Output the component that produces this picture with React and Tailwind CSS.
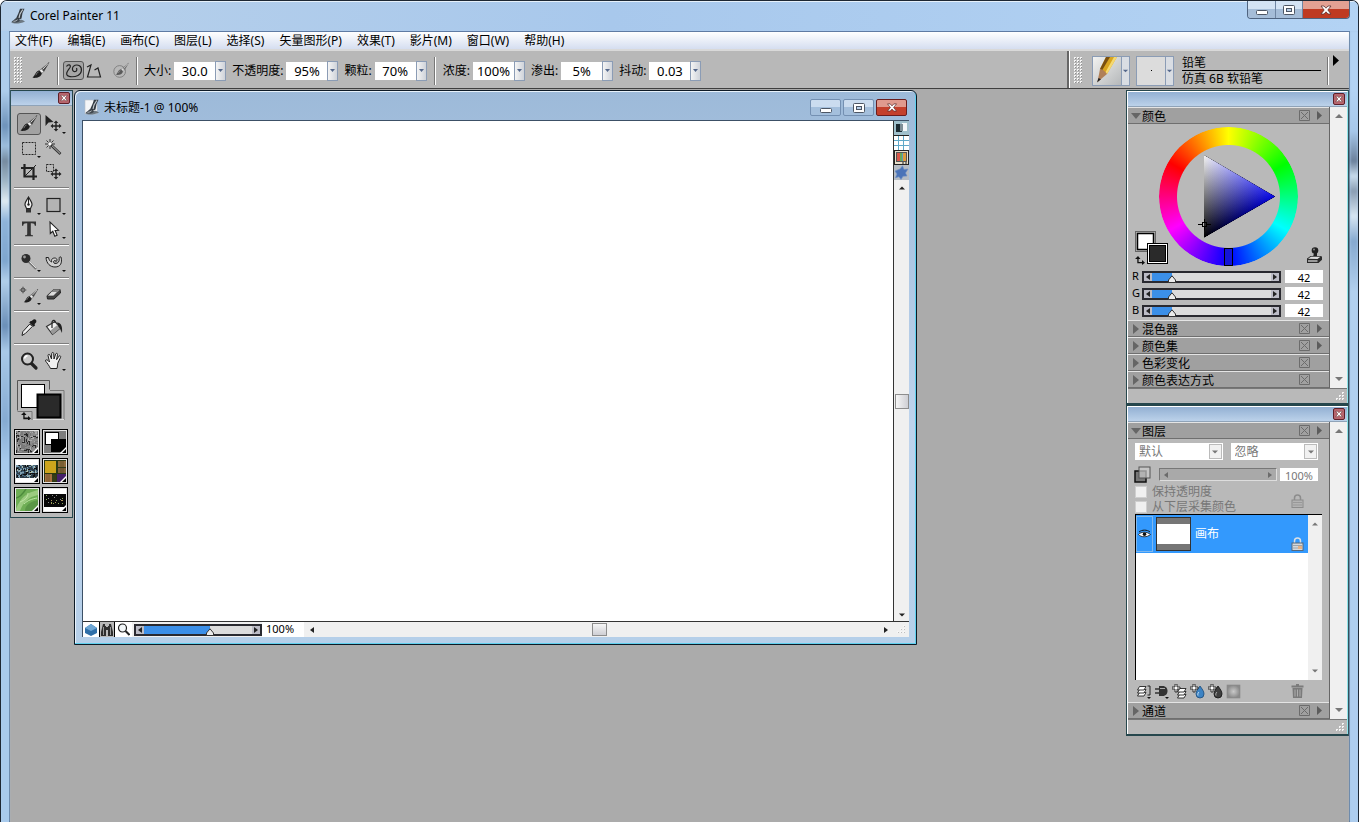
import React, { useState } from "react";

const ui = "font-['Noto_Sans','Noto_Sans_CJK_SC',sans-serif]";

function CloseCross({ className = "" }) {
  return (
    <svg className={className} viewBox="0 0 12 10" aria-hidden="true">
      <path d="M1 1h3l2 2.2L8 1h3L7.8 5 11 9H8L6 6.8 4 9H1l3.200-4z" fill="#fff" stroke="#5a3030" strokeWidth=".8" />
    </svg>
  );
}

function MinGlyph() {
  return (
    <svg className="h-3 w-4" viewBox="0 0 16 12" aria-hidden="true">
      <rect x="2.500" y="6.500" width="11" height="4" rx="1" fill="#fff" stroke="#4d5664" />
    </svg>
  );
}

function MaxGlyph() {
  return (
    <svg className="h-3 w-4" viewBox="0 0 16 12" aria-hidden="true">
      <rect x="2.500" y="1.500" width="11" height="9" rx="1" fill="#fff" stroke="#4d5664" />
      <rect x="5.500" y="4.500" width="5" height="3" fill="#b9cfe8" stroke="#4d5664" />
    </svg>
  );
}

function PainterIcon({ page }) {
  return (
    <svg className="h-4 w-4 shrink-0" viewBox="0 0 16 16" aria-hidden="true">
      {page && <path d="M1 1h8l4 4v10H1z" fill="#f4f6f8" stroke="#b8c0c8" strokeWidth=".6" />}
      <path d="M1 14.500c3 1.500 9 1.500 14-1-2-1.600-4-2-6-1.500z" fill="#6d7982" />
      <path d="M10 .8h4.500L12.500 5l-1 5.500-4 2-1.500-2L8.500 5z" fill="#343b42" />
      <path d="M12.800 1.500 10 6l-1 4" stroke="#c5ccd2" strokeWidth="1.100" fill="none" />
      <path d="M6.700 10c-2 .3-2.500 2.500-5.200 3.500 2.500 1.700 7 1.400 8.500-1z" fill="#3f474e" />
      <path d="M3.500 13.300c1.500 0 3-.5 4-1.500" stroke="#dfe5ea" strokeWidth=".8" fill="none" />
    </svg>
  );
}

function Tri({ dir, className = "fill-[#444]" }) {
  const d = { up: "M0 5 4 1l4 4z", down: "M0 1h8L4 5z", left: "M6 0v6L2 3z", right: "M2 0v6l4-3z" }[dir];
  return (
    <svg className={"h-[6px] w-[8px] " + className} viewBox="0 0 8 6" aria-hidden="true">
      <path d={d} />
    </svg>
  );
}

function Grip() {
  return (
    <svg className="h-[27px] w-[8px] shrink-0" aria-hidden="true">
      <defs>
        <pattern id="grip" width="3" height="3" patternUnits="userSpaceOnUse">
          <rect width="2" height="2" fill="#f4f4f4" />
          <rect x="1" y="1" width="1" height="1" fill="#8f8f8f" />
        </pattern>
      </defs>
      <rect width="8" height="27" fill="url(#grip)" />
    </svg>
  );
}

function SizeGrip() {
  return (
    <svg className="h-[9px] w-[9px]" viewBox="0 0 9 9" aria-hidden="true">
      <path d="M6 0h2v2H6zM3 3h2v2H3zM6 3h2v2H6zM0 6h2v2H0zM3 6h2v2H3zM6 6h2v2H6z" fill="#f6f6f6" />
      <path d="M8 1v1H7zM5 4v1H4zM8 4v1H7zM2 7v1H1zM5 7v1H4zM8 7v1H7z" fill="#888" />
    </svg>
  );
}

/* ---------- tool glyphs, on a 20x20 grid ---------- */
const Brush = () => (
  <>
    <path d="M18 1.500 10.500 8l2.300 2.400z" fill="#4a4a4a" stroke="#222" strokeWidth=".5" />
    <path d="M17 2.500 11.500 8.500" stroke="#eee" strokeWidth=".9" />
    <path d="m10.300 8-2 1.600 2.600 2.700 1.900-1.900z" fill="#eee" stroke="#444" strokeWidth=".5" />
    <path d="M8.200 9.600c-3.500.4-3.700 4.400-6.700 7.200 4 .6 8.800-.6 9.300-4.500z" fill="#1d1d1d" />
    <path d="M7.500 11c-1.500.5-2 2-2.700 3.200" stroke="#999" fill="none" strokeWidth=".8" />
  </>
);
const Cross4 = ({ x, y }) => (
  <g transform={`translate(${x} ${y})`}>
    <path d="M0-5.500 2.300-3H.7v2.300H3v-1.600L5.500 0 3 2.300V.7H.7V3h1.600L0 5.500-2.300 3h1.600V.7H-3v1.600L-5.500 0-3-2.300v1.600h2.300V-3h-1.600z" fill="#222" />
  </g>
);
const glyphs = {
  brush: <Brush />,
  layerAdjust: (
    <>
      <path d="M1.500 1v11l3-3.500L9.500 8z" fill="#222" />
      <Cross4 x={12} y={12} />
    </>
  ),
  select: <rect x="3.500" y="4.500" width="13" height="12" fill="none" stroke="#222" strokeDasharray="2 1" />,
  wand: (
    <>
      <path d="m7 7 9.500 9" stroke="#333" strokeWidth="2.600" />
      <path d="m8 7.700 8 7.700" stroke="#bbb" strokeWidth="1" />
      <path d="M6 1v3M6 8v3M1 6h3M8 6h3M2.500 2.500l2 2M9.500 2.500l-2 2M2.500 9.500l2-2" stroke="#222" strokeWidth=".9" />
      <circle cx="6" cy="6" r="1.300" fill="#fff" />
    </>
  ),
  crop: (
    <>
      <path d="M5.500 2v12.500H18M2 6h12.500v12" fill="none" stroke="#222" strokeWidth="2.200" />
      <path d="M17 3 6 14" stroke="#222" />
    </>
  ),
  selAdjust: (
    <>
      <rect x="2.500" y="2.500" width="7" height="7" fill="none" stroke="#222" strokeDasharray="2 1" />
      <Cross4 x={12} y={12} />
    </>
  ),
  pen: (
    <>
      <path d="M9.500 2C8 5 5.500 7.500 6 10l1.500 3.500h4L13 10C13.500 7.500 11 5 9.500 2z" fill="#f0f0f0" stroke="#222" strokeWidth="1.100" />
      <path d="M9.500 2v7" stroke="#222" />
      <circle cx="9.500" cy="9.500" r="1.200" fill="#222" />
      <path d="M7 14h5v3.500H7z" fill="#333" />
    </>
  ),
  rect: <rect x="3" y="3.500" width="13" height="13" fill="#b4b4b4" stroke="#222" strokeWidth="1.200" />,
  text: <path d="M3 2.500h14v4.200h-1.200c-.3-1.800-1-2.500-3-2.500h-1V15c0 1 .6 1.200 2.200 1.300v1H6v-1c1.600-.1 2.200-.3 2.200-1.300V4.200h-1c-2 0-2.700.7-3 2.500H3z" fill="#333" />,
  shapeSel: <path d="m6 3 .3 11.500 2.500-2.200 2 5 2.300-1-2-4.800 3.400-.3z" fill="#fff" stroke="#222" strokeWidth="1.100" />,
  dodge: (
    <>
      <path d="m9 9 8 8" stroke="#777" strokeWidth="2.200" />
      <path d="m10 9 7 7" stroke="#ddd" />
      <circle cx="7" cy="6.500" r="4.500" fill="#2c2c2c" />
      <circle cx="5.500" cy="5" r="1.400" fill="#999" />
    </>
  ),
  spiral: (
    <>
      <path d="M2 5.500c.5 6 4 9.500 9 9.500 5.500 0 7.500-4 6-10-1-.5-2 .2-1.800 1.500.4 3-1 5-4.200 5-1.500 0-2-2.500-.5-3 1-.3 1.500.5 1.300 1.200 2-1.200 1.200-3.700-1-3.700-3 0-3.800 2-3 4C6 9.500 5 8 4.500 5.500z" fill="#d0d0d0" stroke="#222" />
    </>
  ),
  cloner: (
    <>
      <g transform="translate(3.500 3) scale(.85)"><Brush /></g>
      <circle cx="4" cy="5" r="2" fill="none" stroke="#444" />
      <path d="M4 1.500v7M.5 5h7" stroke="#444" strokeWidth=".6" />
    </>
  ),
  eraser: (
    <>
      <path d="M9.500 4.500H16l.5 3.500-6.500 6H3.500L3 10.800z" fill="#444" stroke="#222" />
      <path d="M9.500 4.500H16L9.500 11H3.200z" fill="#ddd" stroke="#333" strokeWidth=".7" />
      <path d="M9.500 4.500H16L13.500 7H7.200z" fill="#888" />
    </>
  ),
  dropper: (
    <>
      <path d="m12.500 3 2-1.500c2-.8 3.500 1 2.700 2.700L15.500 6.300l.7.900-1.700 1.500-4.300-4.300 1.500-1.500z" fill="#1d1d1d" />
      <path d="m10.800 6 2.500 2.500-7 7L3 17.500l.8-3.800z" fill="#eee" stroke="#222" />
    </>
  ),
  bucket: (
    <>
      <path d="m2.500 8.500 8.500-5 5.500 6.500-8 6.500z" fill="#eee" stroke="#333" strokeWidth="1.200" />
      <path d="m6.500 12.500 7.500-6 2.500 3.500-8 6.500z" fill="#999" />
      <path d="M8 10V4C9 1.500 11.500 2 11 5" fill="none" stroke="#222" strokeWidth="1.200" />
      <path d="M13 4.500c5 .5 5.500 5 5 10.500-1.500-3-2-5-3.500-6z" fill="#222" />
    </>
  ),
  zoom: (
    <>
      <path d="m12 12 5 5" stroke="#222" strokeWidth="3.200" strokeLinecap="round" />
      <circle cx="8.500" cy="8" r="5.500" fill="#c9c9c9" stroke="#222" strokeWidth="2" />
      <path d="M5.500 7.500c.3-1.500 1.500-2.600 3-2.800" stroke="#fff" fill="none" strokeWidth="1.500" />
    </>
  ),
  hand: (
    <path d="M6.500 17.500C5 14.500 3.500 12.500 1.500 10c-.3-1.500 1.500-1.500 2.500-.5L5.500 11 4 4.500c0-1.500 1.700-1.500 2-.2L7.500 8 7.700 2.500c.2-1.400 1.900-1.400 2 0L10 8l1.700-5c.6-1.200 2-.8 1.800.5l-.9 5.200 2.300-3.500c.9-1 2.200-.2 1.700 1l-2.800 6c-.2 2-.3 3.500-.8 5.300z" fill="#f1f1f1" stroke="#222" strokeWidth="1" />
  ),
};

const toolGroups = [
  [["brush", "画笔"], ["layerAdjust", "图层调整", 1], ["select", "矩形选区", 1], ["wand", "魔棒"], ["crop", "裁剪"], ["selAdjust", "选区调整"]],
  [["pen", "钢笔", 1], ["rect", "矩形", 1], ["text", "文字"], ["shapeSel", "形状选择", 1]],
  [["dodge", "减淡", 1], ["spiral", "构图", 1]],
  [["cloner", "克隆", 1], ["eraser", "橡皮擦"]],
  [["dropper", "吸管"], ["bucket", "油漆桶"]],
  [["zoom", "放大镜"], ["hand", "抓手", 1]],
];

function Tool({ id, label, more, active, onClick }) {
  return (
    <button
      type="button"
      aria-label={label}
      aria-pressed={active}
      onClick={onClick}
      className="relative flex h-6 w-[25px] items-center justify-center"
    >
      <span className={active ? "rounded-[3px] border border-[#555] bg-[#a2a2a2] px-px" : ""}>
        <svg className="block h-5 w-5" viewBox="0 0 20 20" aria-hidden="true">{glyphs[id]}</svg>
      </span>
      {more && (
        <svg className="absolute right-0 bottom-[2px] h-[2px] w-[4px]" viewBox="0 0 4 2" aria-hidden="true">
          <path d="M0 0h4L2 2z" fill="#111" />
        </svg>
      )}
    </button>
  );
}

function PaletteBar() {
  return (
    <div className="flex h-[15px] items-center justify-end border-b border-[#8fa3b8] bg-linear-to-b from-[#93b0d3] to-[#bcd2ea] pr-[2px]">
      <button type="button" aria-label="关闭面板" className="flex h-[12px] w-[12px] items-center justify-center rounded-[2px] border border-[#5d1f28] bg-[#b8666e]">
        <CloseCross className="h-[8px] w-[8px]" />
      </button>
    </div>
  );
}

function speckle(seed, colors, n, x0, y0, w, h, size) {
  const out = [];
  let s = seed;
  const next = () => (s = (s * 16807) % 2147483647) / 2147483647;
  for (let i = 0; i < n; i++) {
    const x = x0 + Math.floor(next() * (w - 1));
    const y = y0 + Math.floor(next() * (h - 1));
    const t = next() > 0.5;
    out.push(<rect key={i} x={x} y={y} width={t ? size : 1} height={t ? 1 : size} fill={colors[Math.floor(next() * colors.length)]} />);
  }
  return out;
}

const textures = [
  ["纸纹", <><rect width="22" height="22" fill="#7a7a7a" />{speckle(7, ["#2a2a2a", "#aaa", "#8c8c8c", "#8c8c8c"], 150, 0, 0, 22, 22, 3)}</>],
  ["渐变", <><rect width="22" height="22" fill="#7d7d7d" /><rect x="1.500" y="1.500" width="13" height="12" fill="#fff" stroke="#000" /><rect x="7" y="8" width="15" height="13" fill="#000" /></>],
  ["图案", <><rect width="22" height="22" fill="#fff" /><rect y="5" width="22" height="13" fill="#2e3d48" />{speckle(31, ["#7e9fb1", "#a9bcae", "#111", "#4b6d84"], 130, 0, 5, 22, 13, 2)}</>],
  ["织物", <><rect width="22" height="22" fill="#2c3a14" /><rect x="1" y="1" width="11" height="12" fill="#cda51c" /><rect x="14" y="1" width="8" height="6" fill="#8d6b3b" /><rect x="14" y="8" width="8" height="5" fill="#80603a" /><rect x="1" y="14" width="7" height="8" fill="#a7713f" /><rect x="13" y="14" width="9" height="8" fill="#46206b" /><path d="M9 15v6M11 15v6M3 14v8M5 14v8M17 1v12M19 1v12" stroke="#4d4422" strokeWidth=".6" /></>],
  ["外观", <><rect width="22" height="22" fill="#6fae55" /><path d="M0 20C5 8 10 4 22 1v5C12 8 7 14 4 22H0z" fill="#9ccb80" /><path d="M9 22c0-6 5-9 13-11v11z" fill="#5a9646" /><path d="M0 9C5 8 8 3 10 0" stroke="#4c8a3c" fill="none" strokeWidth="1.500" /><path d="M8 15c4-4 8-5 13-6M12 4c0 4-3 7-8 9" stroke="#bfe6a5" fill="none" /></>],
  ["喷嘴", <><rect width="22" height="22" fill="#fff" /><rect y="5" width="22" height="13" fill="#080808" />{speckle(11, ["#8dab5a", "#b0955c", "#8d8d8d"], 20, 2, 6, 18, 11, 1)}</>],
];

function SwapIcon({ className = "" }) {
  return (
    <svg className={"h-[9px] w-[10px] " + className} viewBox="0 0 10 9" aria-hidden="true">
      <path d="M3 0 5.500 3H3.600v3H7V4l3 2.700L7 9V7.300H2.300V3H0z" fill="#111" />
    </svg>
  );
}

function ToolPalette() {
  const [tool, setTool] = useState("brush");
  return (
    <aside className="w-[63px] shrink-0 border border-[#26474d] bg-[#b9b9b9]">
      <PaletteBar />
      <div className="flex flex-col px-[3px] pt-[6px] pb-1">
        {toolGroups.map((group, i) => (
          <div key={i}>
            {i > 0 && <div className="mt-[3px] mb-1 h-[2px] border-t border-[#7d7d7d] bg-white" />}
            <div className="grid grid-cols-[25px_25px] pl-[2px]">
              {group.map(([id, label, more]) => (
                <Tool key={id} id={id} label={label} more={!!more} active={tool === id} onClick={() => setTool(id)} />
              ))}
            </div>
          </div>
        ))}
        <div className="px-[3px] pt-[7px] pb-[9px]">
          <svg className="block h-10 w-12" viewBox="0 0 48 40" role="img" aria-label="主色与副色">
            <path d="M.5 30.500V.5h32v9" fill="none" stroke="#555" />
            <path d="M33 10.500h14v29.500M.5 31.500H15V40" fill="none" stroke="#777" />
            <path d="M16 39.500h31" stroke="#ddd" />
            <rect x="4.500" y="4.500" width="23" height="23" fill="#fff" stroke="#000" />
            <rect x="20.500" y="14.500" width="23" height="23" fill="#2a2a2a" stroke="#000" strokeWidth="2" />
            <path d="M7 32 9.500 35H7.600v2.500H11V36l3 2.500-3 2.300v-1.500H6.300V35H4z" fill="#111" />
          </svg>
        </div>
        <div className="grid grid-cols-[26px_26px] gap-x-[2px] gap-y-[3px]">
          {textures.map(([label, art]) => (
            <button key={label} type="button" aria-label={label} className="h-[26px] border border-black bg-[#e4e4e4] p-px">
              <svg className="block h-full w-full" viewBox="0 0 22 22" preserveAspectRatio="none" aria-hidden="true">
                {art}
                <path d="M22 16v6h-6z" fill="#fff" />
                <path d="M22 18v4h-4z" fill="#000" />
              </svg>
            </button>
          ))}
        </div>
      </div>
    </aside>
  );
}

function Stepper({ label, value }) {
  return (
    <div className="flex items-center">
      <label htmlFor={"opt-" + label} className="pt-px pr-[3px] text-[12px]">{label}:</label>
      <input id={"opt-" + label} defaultValue={value} className="h-[18px] w-[41px] bg-white text-center text-[13px] leading-[18px] outline-none" />
      <button type="button" aria-label={label + "滑块"} className="flex h-[20px] w-[11px] items-center justify-center border border-[#8b9cb5] bg-linear-to-r from-[#f4f4f4] to-[#cfd3da]">
        <svg className="h-[3px] w-[5px]" viewBox="0 0 5 3" aria-hidden="true"><path d="M0 0h5L2.500 3z" fill="#55688c" /></svg>
      </button>
    </div>
  );
}

function Divider() {
  return <div className="h-7 w-[2px] shrink-0 border-l border-[#777] bg-white" />;
}

function ToolBar() {
  return (
    <div className="flex h-10 border-t-2 border-b border-t-[#d9d9d9] border-b-[#3f3f3f] bg-[#b8b8b8]">
      <div className="flex min-w-0 flex-1 items-center border-r-2 border-[#666] pt-[2px] pl-1">
        <Grip />
        <svg className="ml-[9px] h-5 w-5" viewBox="0 0 20 20" aria-hidden="true"><Brush /></svg>
        <div className="ml-[6px]"><Divider /></div>
        <div className="ml-1 flex items-center gap-[2px]">
          <button type="button" aria-label="自由笔触" className="flex h-[19px] w-[21px] items-center justify-center rounded-[3px] border border-[#555] bg-[#a5a5a5]">
            <svg className="h-4 w-[18px]" viewBox="0 0 18 16" aria-hidden="true">
              <path d="M1.500 3.500C3 1 6.500 1.500 5 4.500 3.500 7 .5 9.500 2 12c1.500 2.500 8 2 11 .5C17 10.500 17.500 5 14.500 2.800 11.500 1 8 2.500 7.500 5c-.4 2.500 1 4 3 3.500 1.500-.5 1.500-2 1-3.500" fill="none" stroke="#222" strokeWidth="1.200" />
            </svg>
          </button>
          <button type="button" aria-label="直线笔触">
            <svg className="block h-4 w-4" viewBox="0 0 16 16" aria-hidden="true">
              <path d="m1 4 4-2L1.500 14h13L12 5 8.500 7" fill="none" stroke="#222" strokeWidth="1.200" />
            </svg>
          </button>
          <button type="button" aria-label="对齐路径" className="ml-2 opacity-60">
            <svg className="block h-[18px] w-[18px]" viewBox="0 0 20 20" aria-hidden="true">
              <circle cx="8.500" cy="10.500" r="6.500" fill="none" stroke="#555" />
              <g transform="translate(3 0) scale(.85)"><Brush /></g>
            </svg>
          </button>
        </div>
        <div className="mx-[6px]"><Divider /></div>
        <div className="flex items-center gap-[6px]">
          <Stepper label="大小" value="30.0" />
          <Stepper label="不透明度" value="95%" />
          <Stepper label="颗粒" value="70%" />
        </div>
        <div className="mx-[7px]"><Divider /></div>
        <div className="flex items-center gap-[6px]">
          <Stepper label="浓度" value="100%" />
          <Stepper label="渗出" value="5%" />
          <Stepper label="抖动" value="0.03" />
        </div>
      </div>
      <div className="flex w-[280px] shrink-0 items-center border-l border-white pt-[2px] pl-1">
        <Grip />
        <button type="button" aria-label="画笔类别" className="ml-[10px] flex h-[30px] border border-[#8b9cb5]">
          <svg className="block h-7 w-7" viewBox="0 0 28 28" aria-hidden="true">
            <defs>
              <linearGradient id="pbg" x1="0" y1="0" x2="1" y2="1"><stop offset="0" stopColor="#f2f2f0" /><stop offset="1" stopColor="#b5b8ba" /></linearGradient>
            </defs>
            <rect width="28" height="28" fill="url(#pbg)" />
            <path d="M13 0h11L14 17l-7-5z" fill="#d9a520" />
            <path d="M13 0h4L9 13.500 7 12z" fill="#7a4f10" />
            <path d="M21 0h3L14 17l-2-1z" fill="#f5d970" />
            <path d="M7 12c2.500.5 5 2 7 5l-9.500 8z" fill="#b08058" />
            <path d="M5.500 21 8 22.300 4 25.500z" fill="#222" />
          </svg>
          <span className="flex w-[8px] items-center justify-center border-l border-[#8b9cb5] bg-[#d9dde3]"><Tri dir="down" className="fill-[#55688c] scale-75" /></span>
        </button>
        <button type="button" aria-label="画笔变体" className="ml-[6px] flex h-[30px] border border-[#8b9cb5]">
          <span className="flex h-7 w-7 items-center justify-center bg-[#dcdcdc]"><span className="h-px w-px bg-black" /></span>
          <span className="flex w-[8px] items-center justify-center border-l border-[#8b9cb5] bg-[#d9dde3]"><Tri dir="down" className="fill-[#55688c] scale-75" /></span>
        </button>
        <div className="ml-2 flex-1 text-[12px] leading-4">
          <div className="h-4 border-b border-black">铅笔</div>
          <div>仿真 6B 软铅笔</div>
        </div>
        <div className="ml-[6px] h-7 w-[2px] border-l border-[#777] bg-white" />
        <button type="button" aria-label="画笔菜单" className="mx-[4px] self-start pt-[2px]">
          <svg className="mr-[6px] h-[11px] w-[6px]" viewBox="0 0 6 11" aria-hidden="true"><path d="M0 0v11l6-5.500z" fill="#000" /></svg>
        </button>
      </div>
    </div>
  );
}

/* Horizontal slider with end arrows; the native range input handles input. */
function ArrowSlider({ label, initial, max, fill = true, disabled, className = "" }) {
  const [v, setV] = useState(initial);
  const pct = (v / max) * 100;
  if (disabled) {
    return (
      <div className={"relative flex h-[13px] items-center justify-between border border-t-[#777] border-l-[#777] border-r-[#ddd] border-b-[#ddd] bg-[#a9a9a9] px-[2px] " + className}>
        <Tri dir="left" className="fill-[#6b6b6b]" />
        <input type="range" aria-label={label} disabled value={v} max={max} readOnly className="absolute inset-0 h-full w-full opacity-0" />
        <Tri dir="right" className="fill-[#6b6b6b]" />
      </div>
    );
  }
  return (
    <div className={"flex h-[12px] items-stretch border-2 border-[#2a2a30] bg-[#dcdcdc] " + className}>
      <button type="button" aria-label={label + "减"} onClick={() => setV(Math.max(0, v - 1))} className="flex w-[8px] items-center bg-[#bcbcc6]"><Tri dir="left" className="fill-[#222]" /></button>
      <div className="relative flex-1">
        {fill && <div className="h-full bg-[#3b8fe8]" style={{ width: pct + "%" }} />}
        <input type="range" aria-label={label} value={v} max={max} onChange={(e) => setV(+e.target.value)} className="absolute inset-0 h-full w-full opacity-0" />
        <svg className="pointer-events-none absolute top-[2px] h-[8px] w-[8px] -translate-x-1/2" style={{ left: pct + "%" }} viewBox="0 0 8 8" aria-hidden="true">
          <path d="M4 .8 7.500 5v2.500h-7V5z" fill="#ececec" stroke="#333" />
        </svg>
      </div>
      <button type="button" aria-label={label + "加"} onClick={() => setV(Math.min(max, v + 1))} className="flex w-[8px] items-center bg-[#bcbcc6]"><Tri dir="right" className="fill-[#222]" /></button>
    </div>
  );
}

function CanvasWindow() {
  return (
    <section className="ml-px flex min-w-0 max-w-[843px] flex-1 flex-col rounded-t-[6px] border border-[#0d1a26] bg-[#b9d1ea] bg-linear-to-b from-[#9dbad9] via-[#bdd3ec] via-60% to-[#b5cfe9] shadow-[inset_-1px_-1px_0_#5fd0ee,inset_1px_1px_0_#e8f2fb]">
      <header className="flex h-[29px] items-center gap-[4px] pt-[3px] pr-[9px] pl-[9px]">
        <PainterIcon page />
        <h2 className="pt-px text-[12px]">未标题-1 @ 100%</h2>
        <div className="ml-auto flex gap-[2px] pt-px">
          <button type="button" aria-label="最小化" className="flex h-[17px] w-[31px] items-center justify-center rounded-[2px] border border-[#7490b2] bg-linear-to-b from-[#cbdcef] from-50% to-[#a4bfdc] to-50%"><MinGlyph /></button>
          <button type="button" aria-label="最大化" className="flex h-[17px] w-[31px] items-center justify-center rounded-[2px] border border-[#7490b2] bg-linear-to-b from-[#cbdcef] from-50% to-[#a4bfdc] to-50%"><MaxGlyph /></button>
          <button type="button" aria-label="关闭" className="flex h-[17px] w-[31px] items-center justify-center rounded-[2px] border border-[#6b1d1d] bg-linear-to-b from-[#e09a8e] from-50% to-[#c4402c] to-50%"><CloseCross className="h-[9px] w-[12px]" /></button>
        </div>
      </header>
      <div className="mx-[7px] mb-[7px] flex flex-col border-t border-l border-[#3c5066]">
        <div className="flex">
          <div className="h-[500px] flex-1 bg-white" />
          <div className="flex w-[16px] flex-col border-l border-[#333] bg-[#f0f0f0]">
            <button type="button" aria-label="切换图像" className="h-[14px] bg-[#9fc0cc]">
              <svg className="block h-[14px] w-[15px]" viewBox="0 0 15 14" aria-hidden="true"><rect x="2" y="3" width="6" height="8" fill="#1c2c33" /><rect x="8" y="2" width="5" height="8" fill="#f3f8fa" /><rect x="6" y="3" width="3" height="7" fill="#7d8f97" /></svg>
            </button>
            <button type="button" aria-label="网格">
              <svg className="block h-[15px] w-[15px]" viewBox="0 0 15 15" aria-hidden="true"><rect width="15" height="15" fill="#fff" /><path d="M0 .5h15" stroke="#222" /><path d="M4.500 1v14M9.500 1v14M0 5.500h15M0 10.500h15" stroke="#5fa8c8" /></svg>
            </button>
            <button type="button" aria-label="色彩管理">
              <svg className="block h-[15px] w-[15px]" viewBox="0 0 15 15" aria-hidden="true"><rect x=".5" y=".5" width="14" height="14" fill="#e8e0cc" stroke="#222" /><rect x="2.500" y="2.500" width="10" height="9" fill="#8b7a70" stroke="#555" /><rect x="3" y="3" width="3" height="8" fill="#d9574a" /><rect x="6" y="3" width="2" height="8" fill="#6aa858" /><rect x="8" y="3" width="1" height="8" fill="#5aa0b8" /><rect x="9" y="3" width="3" height="8" fill="#dc9a3e" /><path d="M8 13h2M11 13h2" stroke="#222" /></svg>
            </button>
            <button type="button" aria-label="厚涂" className="bg-[#b5bcc4]">
              <svg className="block h-[15px] w-[15px]" viewBox="0 0 15 15" aria-hidden="true"><path d="m6 4 2.500-3.200L10 4.500l4-.5-2.500 4 1.500 3-4 .2-2 3.300-2-2.800-3.500 1L3 9 1 6z" fill="#4b74b8" stroke="#6d90c8" strokeWidth=".6" /></svg>
            </button>
            <div className="flex flex-1 flex-col items-center justify-between pt-[5px] pb-[3px]">
              <button type="button" aria-label="向上滚动"><Tri dir="up" className="block fill-[#222] scale-75" /></button>
              <div className="h-[15px] w-[14px] border border-[#8d8d8d] bg-linear-to-r from-[#f6f6f6] to-[#cfcfd4]" />
              <button type="button" aria-label="向下滚动"><Tri dir="down" className="block fill-[#222] scale-75" /></button>
            </div>
          </div>
        </div>
        <div className="flex h-[16px] items-center border-t border-[#333] bg-[#f0f0f0]">
          <button type="button" aria-label="导航" className="flex h-[15px] w-[16px] items-center justify-center bg-white">
            <svg className="h-3 w-3" viewBox="0 0 12 12" aria-hidden="true"><path d="M6 0 12 4v5l-6 3-6-3V4z" fill="#2f6fa8" /><path d="M6 0 12 4 6 7 0 4z" fill="#6ea6d4" /></svg>
          </button>
          <button type="button" aria-label="查找" className="flex h-[15px] w-[16px] items-center justify-center border-x border-black bg-[#b9b9b9]">
            <svg className="h-[13px] w-[14px]" viewBox="0 0 14 13" aria-hidden="true"><path d="M3 1h2v2h1v1h2V3h1V1h2l2 8v4H8V7H6v6H1V9z" fill="#2e2e2e" /><path d="M3.500 4v8M10.500 4v8" stroke="#999" /></svg>
          </button>
          <button type="button" aria-label="缩放工具" className="flex h-[15px] w-[17px] items-center justify-center bg-white">
            <svg className="h-[13px] w-[13px]" viewBox="0 0 13 13" aria-hidden="true"><circle cx="5.500" cy="5" r="4" fill="#f4f8fa" stroke="#222" strokeWidth="1.200" /><path d="m8.500 8 4 4" stroke="#222" strokeWidth="2" /></svg>
          </button>
          <ArrowSlider label="缩放" initial={61} max={100} className="ml-[2px] w-[128px]" />
          <input aria-label="缩放比例" defaultValue="100%" className="h-[15px] w-[42px] bg-white pl-1 text-[11px] outline-none" />
          <div className="flex flex-1 items-center justify-between pr-[3px] pl-1">
            <button type="button" aria-label="向左滚动"><Tri dir="left" className="block fill-[#222]" /></button>
            <div className="h-[13px] w-[15px] border border-[#8d8d8d] bg-linear-to-b from-[#f6f6f6] to-[#cfcfd4]" />
            <button type="button" aria-label="向右滚动"><Tri dir="right" className="block fill-[#222]" /></button>
          </div>
          <div className="flex w-[16px] justify-center"><SizeGrip /></div>
        </div>
      </div>
    </section>
  );
}

function SectionHeader({ title, open, menu = true }) {
  return (
    <div className="flex h-[17px] items-center border-t border-b border-t-[#e4e4e4] border-b-[#6f6f6f] bg-[#a0a0a0] pl-[3px]">
      <button type="button" aria-expanded={!!open} className="flex items-center text-[12px] leading-[15px]">
        <svg className="mr-px h-[10px] w-[10px]" viewBox="0 0 10 10" aria-hidden="true">
          <path d={open ? "M0 2h10L5 8z" : "M2 0v10l6-5z"} fill="#666" />
        </svg>
        <span className="pt-px">{title}</span>
      </button>
      <button type="button" aria-label={"关闭" + title} className="ml-auto">
        <svg className="block h-[11px] w-[11px]" viewBox="0 0 11 11" aria-hidden="true"><path d="M.5.5h10v10H.5zM2 2l7 7M9 2 2 9" fill="none" stroke="#6c6c6c" /></svg>
      </button>
      <span className="flex w-[19px] pl-[7px]">
        {menu && (
          <button type="button" aria-label={title + "菜单"}>
            <svg className="block h-[9px] w-[5px]" viewBox="0 0 5 9" aria-hidden="true"><path d="M0 0v9l5-4.500z" fill="#5c5c5c" /></svg>
          </button>
        )}
      </span>
    </div>
  );
}

function Panel({ children }) {
  return (
    <div className="border border-b-2 border-[#26474d] bg-[#b9b9b9]">
      <div className="border-t border-r border-l border-t-white border-r-[#8fe3ea] border-l-white">
        <PaletteBar />
        <div className="flex">
          <div className="min-w-0 flex-1 border-r border-[#666]">{children}</div>
          <div className="flex w-[17px] flex-col items-center justify-between bg-[#f0f0f0] py-[6px]">
            <button type="button" aria-label="向上滚动"><Tri dir="up" className="block fill-[#777]" /></button>
            <button type="button" aria-label="向下滚动"><Tri dir="down" className="block fill-[#777]" /></button>
          </div>
        </div>
        <div className="flex h-[15px] items-end justify-end border-t border-[#777] p-[2px]"><SizeGrip /></div>
      </div>
    </div>
  );
}

function ColorWheel() {
  return (
    <div className="relative mx-auto h-[139px] w-[139px]">
      <div className="h-full w-full rounded-full bg-[conic-gradient(#ff0,#0f0_60deg,#0ff_120deg,#00f_180deg,#f0f_240deg,#f00_300deg,#ff0)] mask-[radial-gradient(circle,transparent_51px,#000_52px)]" />
      <svg className="absolute inset-0 h-full w-full" viewBox="0 0 139 139" role="img" aria-label="色相与明度">
        <defs>
          <linearGradient id="cw" gradientUnits="userSpaceOnUse" x1="45" y1="28" x2="80.500" y2="89.700"><stop offset="0" stopColor="#f4f4f4" /><stop offset="1" stopColor="#000" /></linearGradient>
          <linearGradient id="cb" gradientUnits="userSpaceOnUse" x1="116" y1="69.500" x2="45" y2="69.500"><stop offset="0" stopColor="#0606e6" /><stop offset="1" stopColor="#000" /></linearGradient>
        </defs>
        <g className="isolate">
          <path d="M45 28 116 69.500 45 110.500z" fill="url(#cw)" />
          <path d="M45 28 116 69.500 45 110.500z" fill="url(#cb)" className="mix-blend-plus-lighter" />
        </g>
        <rect x="65.500" y="121.500" width="8" height="17" fill="#1414d8" stroke="#000" />
        <path d="M39 97.500h4M48 97.500h4M45.500 92v3.500M45.500 100v3.500" stroke="#000" />
        <rect x="43.500" y="95.500" width="4" height="4" fill="none" stroke="#000" />
      </svg>
    </div>
  );
}

function ColorPanel() {
  return (
    <Panel>
      <SectionHeader title="颜色" open />
      <div className="relative pt-[3px] pb-[2px]">
        <ColorWheel />
        <svg className="absolute bottom-[2px] left-[7px] h-[35px] w-[34px]" viewBox="0 0 34 35" role="img" aria-label="主色与副色">
          <rect x=".5" y=".5" width="20" height="20" fill="#b9b9b9" stroke="#666" />
          <rect x="2.500" y="2.500" width="16" height="16" fill="#fff" stroke="#000" strokeWidth="1.500" />
          <rect x="12.500" y="12.500" width="20" height="20" fill="#fff" stroke="#000" />
          <rect x="14.500" y="14.500" width="16" height="16" fill="#2a2a2a" stroke="#000" />
        </svg>
        <SwapIcon className="absolute bottom-[3px] left-[7px]" />
        <button type="button" aria-label="克隆颜色" className="absolute right-[6px] bottom-1">
          <svg className="block h-[17px] w-[17px]" viewBox="0 0 17 17" aria-hidden="true">
            <circle cx="9" cy="3.500" r="3.300" fill="#222" /><path d="M8 6h3v4H7z" fill="#222" />
            <path d="M1 11.500 4.500 9H15l1 .8v3L12.500 16H1z" fill="#2a2a2a" />
            <path d="M2 11.700 5 9.800h9.500l-3 2.300z" fill="#ddd" /><path d="M2 13h9.500v2H2z" fill="#999" />
            <circle cx="8" cy="2.500" r="1" fill="#888" />
          </svg>
        </button>
      </div>
      <div className="pb-px">
        {["R", "G", "B"].map((c) => (
          <div key={c} className="flex h-[17px] items-center pr-[6px] pl-1">
            <label htmlFor={"ch-" + c} className="w-[10px] text-[11px]">{c}</label>
            <ArrowSlider label={c} initial={42} max={255} className="flex-1" />
            <input id={"ch-" + c} defaultValue="42" className="ml-1 h-[13px] w-[38px] bg-white pt-px text-center text-[11px] leading-[12px] outline-none" />
          </div>
        ))}
      </div>
      <SectionHeader title="混色器" />
      <SectionHeader title="颜色集" />
      <SectionHeader title="色彩变化" menu={false} />
      <SectionHeader title="颜色表达方式" menu={false} />
    </Panel>
  );
}

function LayerSelect({ label, value }) {
  return (
    <div className="relative flex-1">
      <select aria-label={label} disabled className="block h-[17px] w-full appearance-none bg-white pl-1 text-[12px] leading-[17px] text-[#777] opacity-100">
        <option>{value}</option>
      </select>
      <span className="pointer-events-none absolute top-[1px] right-[1px] flex h-[15px] w-[13px] items-center justify-center border border-[#bbb] bg-[#f1f1f1]">
        <Tri dir="down" className="fill-[#777] scale-75" />
      </span>
    </div>
  );
}

function Lock({ dim }) {
  return (
    <svg className="block h-[14px] w-[13px]" viewBox="0 0 13 14" aria-hidden="true">
      <path d="M3.500 6V4a3 3 0 0 1 6 0v2" fill="none" stroke={dim ? "#8c8c8c" : "#d9e0e6"} strokeWidth="1.500" />
      <rect x="1" y="6" width="11" height="7.500" fill={dim ? "#b3b3b3" : "#d5d9dc"} stroke={dim ? "#8c8c8c" : "#56687a"} />
      <path d="M2 8.500h9M2 11h9" stroke={dim ? "#999" : "#9aa4ae"} />
      {!dim && <rect x="7" y="9" width="4" height="3" fill="#e5b183" />}
    </svg>
  );
}

const Plus = () => <path d="M3 0h2v3h3v2H5v3H3V5H0V3h3z" fill="#fff" stroke="#222" strokeWidth=".9" />;
const Stack = ({ x, y }) => (
  <g transform={`translate(${x} ${y})`} fill="#fff" stroke="#222" strokeWidth=".9">
    <path d="M2.500 5.500H9L7 9H.5z" />
    <path d="M2.500 2.500H9L7 6H.5z" />
    <path d="M2.500-.5H9L7 3H.5z" />
  </g>
);
const layerActions = [
  ["图层命令", <><Stack x={1} y={3} /><path d="M11.500 2H14v9h-2.500" fill="none" stroke="#222" /><path d="M11 13h4l-2 2z" fill="#111" /></>],
  ["动态插件", <><path d="M5 2h3.500c3.500 0 5 2.500 5 5s-1.500 5-5 5H5z" fill="#333" /><path d="M1 5h4M1 9h4" stroke="#333" strokeWidth="1.500" /><path d="M6 4.500h5" stroke="#aaa" /><path d="M11 13h4l-2 2z" fill="#111" /></>],
  ["新建图层", <><Stack x={5} y={5} /><Plus /></>],
  ["新建水彩图层", <><path d="M10 2c2 3 4 5 4 8a4 4 0 0 1-8 0c0-3 2-5 4-8z" fill="#3c83c4" stroke="#1b4a78" strokeWidth=".8" /><path d="M9 8c-1 1-1.500 2-1 3.500" stroke="#cfe6f8" fill="none" /><Plus /></>],
  ["新建液态墨水图层", <><path d="M10 2c2 3 4 5 4 8a4 4 0 0 1-8 0c0-3 2-5 4-8z" fill="#3e3e3e" stroke="#111" strokeWidth=".8" /><path d="M9 8c-1 1-1.500 2-1 3.500" stroke="#bbb" fill="none" /><Plus /></>],
  ["新建蒙版", <><defs><radialGradient id="mk"><stop offset="0" stopColor="#c9c9c9" /><stop offset="1" stopColor="#8a8a8a" /></radialGradient></defs><rect x="1" y="1" width="13" height="13" fill="url(#mk)" stroke="#888" strokeWidth=".6" /></>],
];

function LayersPanel() {
  return (
    <Panel>
      <SectionHeader title="图层" open />
      <div className="pr-[7px] pl-[7px]">
        <div className="flex gap-2 pt-1 pr-1">
          <LayerSelect label="合成方式" value="默认" />
          <LayerSelect label="合成深度" value="忽略" />
        </div>
        <div className="flex items-center pt-[6px] pr-1">
          <svg className="-ml-px h-[17px] w-[17px]" viewBox="0 0 17 17" aria-hidden="true">
            <rect x="1" y="5" width="11" height="11" fill="#777" stroke="#111" strokeWidth="1.500" />
            <rect x="5" y="1" width="11" height="11" fill="#ccc" fillOpacity=".7" stroke="#555" />
          </svg>
          <ArrowSlider label="不透明度" initial={100} max={100} disabled className="ml-2 flex-1" />
          <input aria-label="图层不透明度" disabled defaultValue="100%" className="ml-[3px] h-[13px] w-[38px] bg-white pt-px text-center text-[11px] leading-[12px] text-[#777]" />
        </div>
        <div className="flex items-center pt-px">
          <div className="flex flex-1 flex-col text-[12px] leading-[15px] text-[#777]">
            {["保持透明度", "从下层采集颜色"].map((t) => (
              <label key={t} className="flex items-center gap-[5px]">
                <input type="checkbox" disabled className="h-[12px] w-[12px] appearance-none border border-[#cfcfcf] bg-[#f0f0f0]" />
                {t}
              </label>
            ))}
          </div>
          <div className="mr-[18px] pt-1"><Lock dim /></div>
        </div>
        <div className="flex h-[166px] border-t border-l border-black bg-white">
          <ul className="flex-1">
            <li className="flex h-[38px] items-center bg-[#3399fd] text-white">
              <button type="button" aria-label="显示画布" className="flex h-[36px] w-[17px] items-center justify-center border border-[#7fb8ee]">
                <svg className="h-[10px] w-[13px] shrink-0" viewBox="0 0 13 10" aria-hidden="true">
                  <path d="M.5 5.500C3 2.500 9 2.500 12.500 5.500 9 8.500 3 8.500 .5 5.500z" fill="#fff" stroke="#111" strokeWidth=".8" /><circle cx="6.500" cy="5.300" r="1.800" fill="#111" /><path d="M1 3C4 .5 9 .5 12 3" fill="none" stroke="#111" />
                </svg>
              </button>
              <span className="ml-[3px] flex h-[34px] w-[35px] items-center border border-[#333] bg-[#767676]"><span className="h-5 w-full bg-white" /></span>
              <span className="ml-1 flex-1 text-[12px]">画布</span>
              <span className="mr-1 self-end pb-[2px]"><Lock /></span>
            </li>
          </ul>
          <div className="flex w-[14px] flex-col items-center justify-between bg-[#f0f0f0] py-[6px]">
            <button type="button" aria-label="列表向上"><Tri dir="up" className="block fill-[#777] scale-75" /></button>
            <button type="button" aria-label="列表向下"><Tri dir="down" className="block fill-[#777] scale-75" /></button>
          </div>
        </div>
        <div className="flex h-[22px] items-center gap-[3px] pl-px">
          {layerActions.map(([label, art]) => (
            <button key={label} type="button" aria-label={label}>
              <svg className="block h-[15px] w-[15px]" viewBox="0 0 15 15" aria-hidden="true">{art}</svg>
            </button>
          ))}
          <button type="button" aria-label="删除图层" className="mr-[18px] ml-auto">
            <svg className="block h-[14px] w-[13px]" viewBox="0 0 13 14" aria-hidden="true"><path d="M5 0h3v1.500h4.500v2H.5v-2H5zM1.500 4h10L11 14H2z" fill="#7b7b7b" /><path d="M4 5.500v7M6.500 5.500v7M9 5.500v7" stroke="#bbb" strokeWidth=".8" /></svg>
          </button>
        </div>
      </div>
      <SectionHeader title="通道" />
    </Panel>
  );
}

const menus = ["文件(F)", "编辑(E)", "画布(C)", "图层(L)", "选择(S)", "矢量图形(P)", "效果(T)", "影片(M)", "窗口(W)", "帮助(H)"];

export default function App() {
  return (
    <div className={"flex min-h-screen flex-col overflow-hidden rounded-t-[7px] border border-b-0 border-[#1d2733] bg-linear-to-r from-[#a9cdf0] via-[#b2d3f3] to-[#a8c6e8] text-black " + ui}>
      <header className="flex h-[30px] items-start bg-linear-to-r from-[#b7d0ea] via-[#a8c8ec] via-45% to-[#b3d3f4] pr-2 pl-[9px] shadow-[inset_0_1px_0_#e6f1fb]">
        <div className="flex items-center gap-1 pt-[7px]">
          <PainterIcon />
          <h1 className="text-[12px] leading-4">Corel Painter 11</h1>
        </div>
        <div className="ml-auto flex h-[18px] overflow-hidden rounded-b-[4px] border border-t-0 border-[#4f6480]">
          <button type="button" aria-label="最小化" className="flex w-[28px] items-center justify-center border-r border-[#6f86a3] bg-linear-to-b from-[#d3e3f4] from-50% to-[#a5bdd8] to-50%"><MinGlyph /></button>
          <button type="button" aria-label="还原" className="flex w-[27px] items-center justify-center border-r border-[#6f86a3] bg-linear-to-b from-[#d3e3f4] from-50% to-[#a5bdd8] to-50%"><MaxGlyph /></button>
          <button type="button" aria-label="关闭" className="flex w-[46px] items-center justify-center bg-linear-to-b from-[#e3a193] from-45% to-[#bf3a22] to-50%"><CloseCross className="h-[10px] w-[12px]" /></button>
        </div>
      </header>
      <div className="flex flex-1">
        <div className="w-2 shrink-0 bg-[linear-gradient(#aecdec_0_60px,#6f93ba_95px,#9dbedd_115px,#768ba0_130px,#9fb5c6_150px,#dfeaf2_170px,#8fb4da_190px,#7fa6cf_230px,#b2cfea_250px,#6b8fb8_295px,#a9c9e8_320px,#86abd2_390px,#a8caec_430px)] blur-[1px]" />
        <main className="flex min-w-0 flex-1 flex-col border-x border-[#4f6b8c] bg-[#ababab]">
          <nav className="flex h-[18px] items-center gap-[15px] border-t border-[#5f7ba3] bg-linear-to-b from-white to-[#d5def0] pl-[5px]">
            {menus.map((m) => (
              <button key={m} type="button" className="text-[12px] leading-4 whitespace-nowrap">{m}</button>
            ))}
          </nav>
          <ToolBar />
          <div className="flex flex-1 items-start pt-px">
            <ToolPalette />
            <CanvasWindow />
            <aside className="ml-auto w-[223px] shrink-0">
              <ColorPanel />
              <LayersPanel />
            </aside>
          </div>
        </main>
        <div className="w-2 shrink-0 bg-[linear-gradient(#b3d3f4_0_60px,#a7c8ea_100px,#6c819c_130px,#c9dcec_145px,#8a9db3_160px,#d7e6f3_185px,#86a9cf_210px,#b2d0ee_260px,#aecdee)] blur-[1px]" />
      </div>
    </div>
  );
}
